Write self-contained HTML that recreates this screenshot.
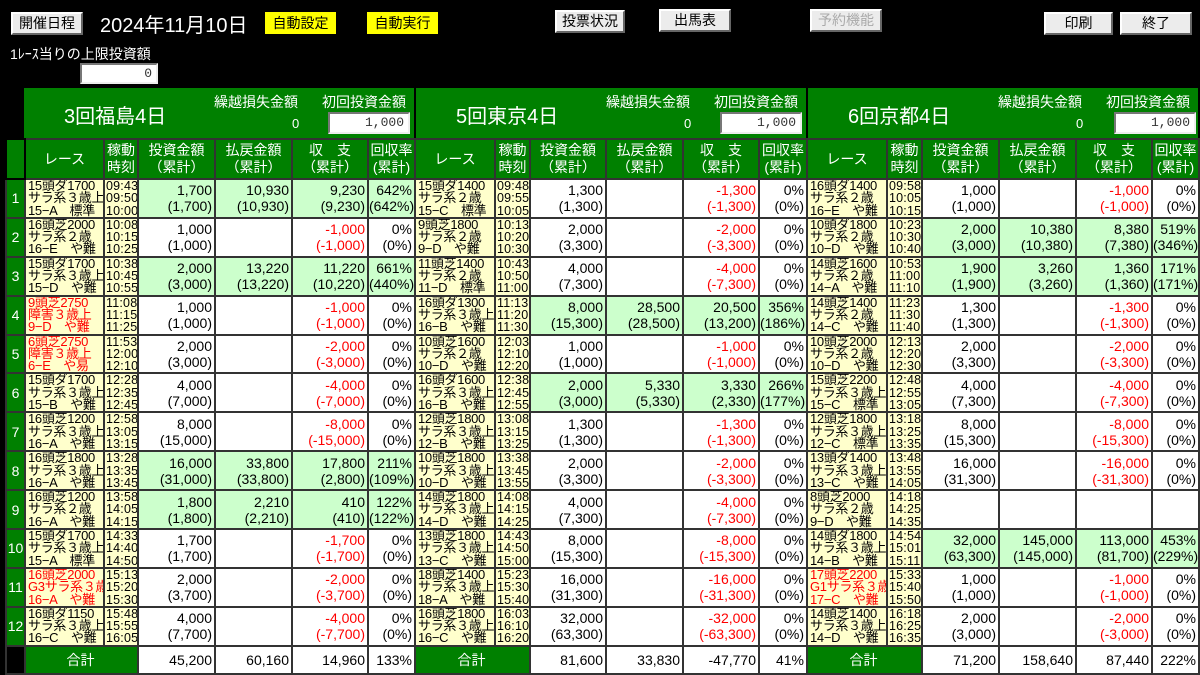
<!DOCTYPE html>
<html><head><meta charset="utf-8"><style>
*{margin:0;padding:0;box-sizing:border-box}
body{width:1200px;height:673px;background:#000;position:relative;overflow:hidden;font-family:"Liberation Sans","Noto Sans CJK JP",sans-serif;color:#000}
.btn{position:absolute;background:#ececec;border:2px solid;border-color:#fff #666 #666 #fff;font-size:14px;text-align:center;line-height:19px;height:23px}
.yb{position:absolute;background:#ffff00;font-size:14px;text-align:center;line-height:22px;height:22px}
.inp{position:absolute;background:#fff;border:2px solid;border-color:#777 #eee #eee #777;text-align:right;font-size:13px;padding-right:4px;font-family:"Liberation Mono","Noto Sans CJK JP",monospace;color:#333}
.hd{position:absolute;top:88px;height:50px;background:#008000;color:#fff}
.hd .t{position:absolute;left:40px;top:12px;font-size:20px}
.hd .k{position:absolute;left:190px;top:4px;font-size:14px}
.hd .z{position:absolute;left:268px;top:28px;font-size:13px}
.hd .s{position:absolute;left:298px;top:4px;font-size:14px}
table{position:absolute;left:5px;top:138px;border-collapse:collapse;table-layout:fixed;width:1193px}
td{border:2px solid #333;font-size:14px;line-height:16px;overflow:hidden;white-space:nowrap;background:#fff;text-align:right;padding-right:2px}
tr.h td{height:40px;background:#008000;color:#fff;text-align:center;font-size:14px;line-height:17px;padding:0}
tr.d td{height:38.75px}
td.n{background:#008000;color:#fff;text-align:center;padding:0}
td.rc{background:#ffffcc;text-align:left;font-size:13px;line-height:12.3px;padding:0 0 0 2px;letter-spacing:-0.3px}
td.tm{background:#ffffcc;text-align:left;font-size:12.5px;line-height:12.3px;padding:0 0 0 1px;letter-spacing:0.2px}
td.rc.r{color:#f00}
span.r{color:#f00}
tr.tot td{height:28px}
td.gt{background:#008000;color:#fff;text-align:center}
td.bk{background:#000}
</style></head><body>
<div class="btn" style="left:11px;top:12px;width:72px">開催日程</div>
<div style="position:absolute;left:100px;top:9px;color:#fff;font-size:20px">2024年11月10日</div>
<div class="yb" style="left:265px;top:12px;width:71px">自動設定</div>
<div class="yb" style="left:367px;top:12px;width:71px">自動実行</div>
<div class="btn" style="left:555px;top:10px;width:70px">投票状況</div>
<div class="btn" style="left:659px;top:9px;width:72px">出馬表</div>
<div class="btn" style="left:810px;top:9px;width:72px;color:#aaa">予約機能</div>
<div class="btn" style="left:1044px;top:12px;width:69px">印刷</div>
<div class="btn" style="left:1120px;top:12px;width:72px">終了</div>
<div style="position:absolute;left:10px;top:44px;color:#fff;font-size:14px">1ﾚｰｽ当りの上限投資額</div>
<div class="inp" style="left:80px;top:63px;width:78px;height:21px;line-height:17px">0</div>

<div class="hd" style="left:24px;width:390px"><div class="t">3回福島4日</div><div class="k">繰越損失金額</div><div class="z">0</div><div class="s">初回投資金額</div><div class="inp" style="left:304px;top:24px;width:82px;height:22px;line-height:18px">1,000</div></div>
<div class="hd" style="left:416px;width:390px"><div class="t">5回東京4日</div><div class="k">繰越損失金額</div><div class="z">0</div><div class="s">初回投資金額</div><div class="inp" style="left:304px;top:24px;width:82px;height:22px;line-height:18px">1,000</div></div>
<div class="hd" style="left:808px;width:390px"><div class="t">6回京都4日</div><div class="k">繰越損失金額</div><div class="z">0</div><div class="s">初回投資金額</div><div class="inp" style="left:306px;top:24px;width:82px;height:22px;line-height:18px">1,000</div></div>

<table>
<colgroup><col style="width:19px">
<col style="width:79px"><col style="width:34px"><col style="width:77px"><col style="width:77px"><col style="width:76px"><col style="width:47px">
<col style="width:80px"><col style="width:35px"><col style="width:76px"><col style="width:77px"><col style="width:76px"><col style="width:48px">
<col style="width:80px"><col style="width:35px"><col style="width:77px"><col style="width:77px"><col style="width:76px"><col style="width:47px"></colgroup>
<tr class="h"><td class="bk" style="border-color:#000"></td>
<td>レース</td><td>稼動<br>時刻</td><td>投資金額<br>（累計）</td><td>払戻金額<br>（累計）</td><td>収　支<br>（累計）</td><td>回収率<br>(累計)</td>
<td>レース</td><td>稼動<br>時刻</td><td>投資金額<br>（累計）</td><td>払戻金額<br>（累計）</td><td>収　支<br>（累計）</td><td>回収率<br>(累計)</td>
<td>レース</td><td>稼動<br>時刻</td><td>投資金額<br>（累計）</td><td>払戻金額<br>（累計）</td><td>収　支<br>（累計）</td><td>回収率<br>(累計)</td></tr>

<tr class="d"><td class="n">1</td>
<td class="rc">15頭ダ1700<br>サラ系３歳上<br>15−A　標準</td><td class="tm">09:43<br>09:50<br>10:00</td><td style="background:#ccffcc">1,700<br>(1,700)</td><td style="background:#ccffcc">10,930<br>(10,930)</td><td style="background:#ccffcc">9,230<br>(9,230)</td><td style="background:#ccffcc">642%<br>(642%)</td>
<td class="rc">15頭ダ1400<br>サラ系２歳<br>15−C　標準</td><td class="tm">09:48<br>09:55<br>10:05</td><td>1,300<br>(1,300)</td><td></td><td><span class="r">-1,300<br>(-1,300)</span></td><td>0%<br>(0%)</td>
<td class="rc">16頭ダ1400<br>サラ系２歳<br>16−E　や難</td><td class="tm">09:58<br>10:05<br>10:15</td><td>1,000<br>(1,000)</td><td></td><td><span class="r">-1,000<br>(-1,000)</span></td><td>0%<br>(0%)</td></tr>

<tr class="d"><td class="n">2</td>
<td class="rc">16頭芝2000<br>サラ系２歳<br>16−E　や難</td><td class="tm">10:08<br>10:15<br>10:25</td><td>1,000<br>(1,000)</td><td></td><td><span class="r">-1,000<br>(-1,000)</span></td><td>0%<br>(0%)</td>
<td class="rc">9頭芝1800<br>サラ系２歳<br>9−D　や難</td><td class="tm">10:13<br>10:20<br>10:30</td><td>2,000<br>(3,300)</td><td></td><td><span class="r">-2,000<br>(-3,300)</span></td><td>0%<br>(0%)</td>
<td class="rc">10頭ダ1800<br>サラ系２歳<br>10−D　や難</td><td class="tm">10:23<br>10:30<br>10:40</td><td style="background:#ccffcc">2,000<br>(3,000)</td><td style="background:#ccffcc">10,380<br>(10,380)</td><td style="background:#ccffcc">8,380<br>(7,380)</td><td style="background:#ccffcc">519%<br>(346%)</td></tr>

<tr class="d"><td class="n">3</td>
<td class="rc">15頭ダ1700<br>サラ系３歳上<br>15−D　や難</td><td class="tm">10:38<br>10:45<br>10:55</td><td style="background:#ccffcc">2,000<br>(3,000)</td><td style="background:#ccffcc">13,220<br>(13,220)</td><td style="background:#ccffcc">11,220<br>(10,220)</td><td style="background:#ccffcc">661%<br>(440%)</td>
<td class="rc">11頭芝1400<br>サラ系２歳<br>11−D　標準</td><td class="tm">10:43<br>10:50<br>11:00</td><td>4,000<br>(7,300)</td><td></td><td><span class="r">-4,000<br>(-7,300)</span></td><td>0%<br>(0%)</td>
<td class="rc">14頭芝1600<br>サラ系２歳<br>14−A　や難</td><td class="tm">10:53<br>11:00<br>11:10</td><td style="background:#ccffcc">1,900<br>(1,900)</td><td style="background:#ccffcc">3,260<br>(3,260)</td><td style="background:#ccffcc">1,360<br>(1,360)</td><td style="background:#ccffcc">171%<br>(171%)</td></tr>

<tr class="d"><td class="n">4</td>
<td class="rc r">9頭芝2750<br>障害３歳上<br>9−D　や難</td><td class="tm">11:08<br>11:15<br>11:25</td><td>1,000<br>(1,000)</td><td></td><td><span class="r">-1,000<br>(-1,000)</span></td><td>0%<br>(0%)</td>
<td class="rc">16頭ダ1300<br>サラ系３歳上<br>16−B　や難</td><td class="tm">11:13<br>11:20<br>11:30</td><td style="background:#ccffcc">8,000<br>(15,300)</td><td style="background:#ccffcc">28,500<br>(28,500)</td><td style="background:#ccffcc">20,500<br>(13,200)</td><td style="background:#ccffcc">356%<br>(186%)</td>
<td class="rc">14頭芝1400<br>サラ系２歳<br>14−C　や難</td><td class="tm">11:23<br>11:30<br>11:40</td><td>1,300<br>(1,300)</td><td></td><td><span class="r">-1,300<br>(-1,300)</span></td><td>0%<br>(0%)</td></tr>

<tr class="d"><td class="n">5</td>
<td class="rc r">6頭芝2750<br>障害３歳上<br>6−E　や易</td><td class="tm">11:53<br>12:00<br>12:10</td><td>2,000<br>(3,000)</td><td></td><td><span class="r">-2,000<br>(-3,000)</span></td><td>0%<br>(0%)</td>
<td class="rc">10頭芝1600<br>サラ系２歳<br>10−D　や難</td><td class="tm">12:03<br>12:10<br>12:20</td><td>1,000<br>(1,000)</td><td></td><td><span class="r">-1,000<br>(-1,000)</span></td><td>0%<br>(0%)</td>
<td class="rc">10頭芝2000<br>サラ系２歳<br>10−D　や難</td><td class="tm">12:13<br>12:20<br>12:30</td><td>2,000<br>(3,300)</td><td></td><td><span class="r">-2,000<br>(-3,300)</span></td><td>0%<br>(0%)</td></tr>

<tr class="d"><td class="n">6</td>
<td class="rc">15頭ダ1700<br>サラ系３歳上<br>15−B　や難</td><td class="tm">12:28<br>12:35<br>12:45</td><td>4,000<br>(7,000)</td><td></td><td><span class="r">-4,000<br>(-7,000)</span></td><td>0%<br>(0%)</td>
<td class="rc">16頭ダ1600<br>サラ系３歳上<br>16−B　や難</td><td class="tm">12:38<br>12:45<br>12:55</td><td style="background:#ccffcc">2,000<br>(3,000)</td><td style="background:#ccffcc">5,330<br>(5,330)</td><td style="background:#ccffcc">3,330<br>(2,330)</td><td style="background:#ccffcc">266%<br>(177%)</td>
<td class="rc">15頭芝2200<br>サラ系３歳上<br>15−C　標準</td><td class="tm">12:48<br>12:55<br>13:05</td><td>4,000<br>(7,300)</td><td></td><td><span class="r">-4,000<br>(-7,300)</span></td><td>0%<br>(0%)</td></tr>

<tr class="d"><td class="n">7</td>
<td class="rc">16頭芝1200<br>サラ系３歳上<br>16−A　や難</td><td class="tm">12:58<br>13:05<br>13:15</td><td>8,000<br>(15,000)</td><td></td><td><span class="r">-8,000<br>(-15,000)</span></td><td>0%<br>(0%)</td>
<td class="rc">12頭芝1800<br>サラ系３歳上<br>12−B　や難</td><td class="tm">13:08<br>13:15<br>13:25</td><td>1,300<br>(1,300)</td><td></td><td><span class="r">-1,300<br>(-1,300)</span></td><td>0%<br>(0%)</td>
<td class="rc">12頭芝1800<br>サラ系３歳上<br>12−C　標準</td><td class="tm">13:18<br>13:25<br>13:35</td><td>8,000<br>(15,300)</td><td></td><td><span class="r">-8,000<br>(-15,300)</span></td><td>0%<br>(0%)</td></tr>

<tr class="d"><td class="n">8</td>
<td class="rc">16頭芝1800<br>サラ系３歳上<br>16−A　や難</td><td class="tm">13:28<br>13:35<br>13:45</td><td style="background:#ccffcc">16,000<br>(31,000)</td><td style="background:#ccffcc">33,800<br>(33,800)</td><td style="background:#ccffcc">17,800<br>(2,800)</td><td style="background:#ccffcc">211%<br>(109%)</td>
<td class="rc">10頭芝1800<br>サラ系３歳上<br>10−D　や難</td><td class="tm">13:38<br>13:45<br>13:55</td><td>2,000<br>(3,300)</td><td></td><td><span class="r">-2,000<br>(-3,300)</span></td><td>0%<br>(0%)</td>
<td class="rc">13頭ダ1400<br>サラ系３歳上<br>13−C　や難</td><td class="tm">13:48<br>13:55<br>14:05</td><td>16,000<br>(31,300)</td><td></td><td><span class="r">-16,000<br>(-31,300)</span></td><td>0%<br>(0%)</td></tr>

<tr class="d"><td class="n">9</td>
<td class="rc">16頭芝1200<br>サラ系２歳<br>16−A　や難</td><td class="tm">13:58<br>14:05<br>14:15</td><td style="background:#ccffcc">1,800<br>(1,800)</td><td style="background:#ccffcc">2,210<br>(2,210)</td><td style="background:#ccffcc">410<br>(410)</td><td style="background:#ccffcc">122%<br>(122%)</td>
<td class="rc">14頭芝1800<br>サラ系３歳上<br>14−D　や難</td><td class="tm">14:08<br>14:15<br>14:25</td><td>4,000<br>(7,300)</td><td></td><td><span class="r">-4,000<br>(-7,300)</span></td><td>0%<br>(0%)</td>
<td class="rc">8頭芝2000<br>サラ系２歳<br>9−D　や難</td><td class="tm">14:18<br>14:25<br>14:35</td><td></td><td></td><td></td><td></td></tr>

<tr class="d"><td class="n">10</td>
<td class="rc">15頭ダ1700<br>サラ系３歳上<br>15−A　標準</td><td class="tm">14:33<br>14:40<br>14:50</td><td>1,700<br>(1,700)</td><td></td><td><span class="r">-1,700<br>(-1,700)</span></td><td>0%<br>(0%)</td>
<td class="rc">13頭芝1800<br>サラ系３歳上<br>13−C　や難</td><td class="tm">14:43<br>14:50<br>15:00</td><td>8,000<br>(15,300)</td><td></td><td><span class="r">-8,000<br>(-15,300)</span></td><td>0%<br>(0%)</td>
<td class="rc">14頭ダ1800<br>サラ系３歳上<br>14−B　や難</td><td class="tm">14:54<br>15:01<br>15:11</td><td style="background:#ccffcc">32,000<br>(63,300)</td><td style="background:#ccffcc">145,000<br>(145,000)</td><td style="background:#ccffcc">113,000<br>(81,700)</td><td style="background:#ccffcc">453%<br>(229%)</td></tr>

<tr class="d"><td class="n">11</td>
<td class="rc r">16頭芝2000<br>G3サラ系３歳<br>16−A　や難</td><td class="tm">15:13<br>15:20<br>15:30</td><td>2,000<br>(3,700)</td><td></td><td><span class="r">-2,000<br>(-3,700)</span></td><td>0%<br>(0%)</td>
<td class="rc">18頭芝1400<br>サラ系３歳上<br>18−A　や難</td><td class="tm">15:23<br>15:30<br>15:40</td><td>16,000<br>(31,300)</td><td></td><td><span class="r">-16,000<br>(-31,300)</span></td><td>0%<br>(0%)</td>
<td class="rc r">17頭芝2200<br>G1サラ系３歳<br>17−C　や難</td><td class="tm">15:33<br>15:40<br>15:50</td><td>1,000<br>(1,000)</td><td></td><td><span class="r">-1,000<br>(-1,000)</span></td><td>0%<br>(0%)</td></tr>

<tr class="d"><td class="n">12</td>
<td class="rc">16頭ダ1150<br>サラ系３歳上<br>16−C　や難</td><td class="tm">15:48<br>15:55<br>16:05</td><td>4,000<br>(7,700)</td><td></td><td><span class="r">-4,000<br>(-7,700)</span></td><td>0%<br>(0%)</td>
<td class="rc">16頭芝1800<br>サラ系３歳上<br>16−C　や難</td><td class="tm">16:03<br>16:10<br>16:20</td><td>32,000<br>(63,300)</td><td></td><td><span class="r">-32,000<br>(-63,300)</span></td><td>0%<br>(0%)</td>
<td class="rc">14頭芝1400<br>サラ系３歳上<br>14−D　や難</td><td class="tm">16:18<br>16:25<br>16:35</td><td>2,000<br>(3,000)</td><td></td><td><span class="r">-2,000<br>(-3,000)</span></td><td>0%<br>(0%)</td></tr>

<tr class="tot"><td class="bk"></td>
<td class="gt" colspan="2">合計</td><td>45,200</td><td>60,160</td><td>14,960</td><td>133%</td>
<td class="gt" colspan="2">合計</td><td>81,600</td><td>33,830</td><td>-47,770</td><td>41%</td>
<td class="gt" colspan="2">合計</td><td>71,200</td><td>158,640</td><td>87,440</td><td>222%</td></tr>
</table>
</body></html>
